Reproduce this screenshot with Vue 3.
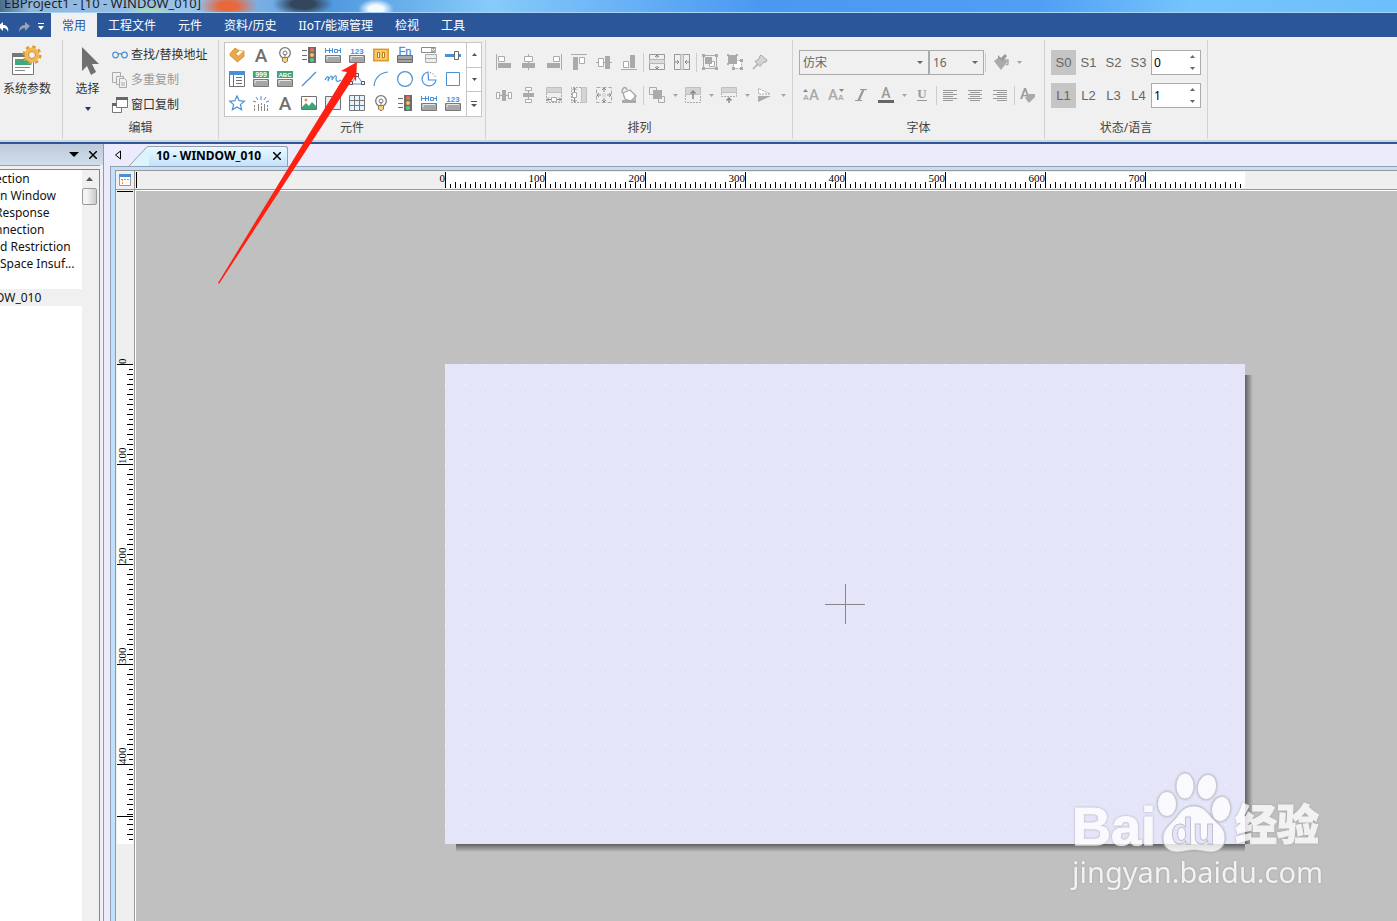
<script setup>
import { ref } from 'vue'

const blue = '#4a90d9'
const key = '<path d="M.5 8.500h15v7H.5z" fill="#a6a6a6" stroke="#7a7a7a"/><path d="M2 12.500V9.500h12" fill="none" stroke="#e8e8e8"/>'
const small = (txt, y, size, fill) =>
  `<text x="8" y="${y}" font-size="${size}" font-weight="700" text-anchor="middle" fill="${fill}">${txt}</text>`
const letter = '<text x="8" y="14.500" font-size="19" font-weight="500" font-family="Roboto, sans-serif" text-anchor="middle" fill="#707070">A</text>'
const bulb = '<circle cx="8" cy="6" r="5.300" fill="#fff" stroke="#777" stroke-width="1.300"/><circle cx="8" cy="6" r="2" fill="none" stroke="#777"/><path d="M8 7v4" stroke="#777"/><path d="M5.500 10.500h5v3.500l-1.500 1.500h-2L5.500 14z" fill="#f7cf7e" stroke="#8a7a55"/>'
const traffic = '<path d="M1 3.500h5M1 8.500h5M1 12.500h5" stroke="#707070"/><rect x="7" width="8" height="16" fill="#6c6c6c"/><circle cx="11" cy="3" r="2" fill="#ff6a4d"/><circle cx="11" cy="8" r="2" fill="#ffc04d"/><circle cx="11" cy="13" r="2" fill="#4fd08f"/>'
const waves = `<path d="M.5 1v5M4.500 1v5M0 3.500h8M7.500 1v5M9.500 2.500h3v3h-3zM12.500 3.500h3M15.500 1v5" fill="none" stroke="${blue}"/>${key}`
const numeric = small('123', 7, 8, blue) + key

const icons = {
  tag: '<path d="M1 6.500 6 1l4 2.500L6.500 7l3 2L15 4v5.500L8.500 15 1 8.500z" fill="#e9a94a" stroke="#c98726" stroke-width=".7"/><path d="m6.500 7 4-3.500L15 4 9.500 9z" fill="#fff" stroke="#c98726" stroke-width=".6"/>',
  letter, bulb, traffic, waves, numeric,
  panel: '<rect x=".8" y="2.300" width="14.400" height="11.400" fill="#fcc863" stroke="#d99a2b" stroke-width="1.500"/><path d="M4.500 5.500h2v5h-2zM9.500 5.500h2v5h-2z" fill="#fff" stroke="#b27a1c"/>',
  fn: `<text x="8" y="7.500" font-size="11" text-anchor="middle" fill="${blue}" stroke="${blue}" stroke-width=".3">Fn</text><path d="M.5 8.500h15v7H.5z" fill="#a3a3a3" stroke="#6e6e6e"/><path d="M1 12.500h14" stroke="#6e6e6e"/>`,
  combo: '<path d="M.5.5h14v5H.5z" fill="#fff" stroke="#8a8a8a"/><path d="M10 1h5v4h-5z" fill="#aaa"/><path d="m11 2 1.500 1.500L14 2" fill="none" stroke="#fff"/><path d="M4.500 7.500h11v8h-11zM4.500 11.500h11" fill="#eee" stroke="#aaa"/>',
  slider: `<path d="M0 8.500h16" stroke="${blue}" stroke-width="3"/><path d="M9.500 4.500h4v8h-4z" fill="#fff" stroke="#666"/>`,
  list: `<path d="M.5 1.500h15v14H.5z" fill="#fff" stroke="#707070"/><path d="M0 0h16v4H0z" fill="${blue}"/><path d="M4.500 4v11M7 6.500h6M7 9.500h6M7 12.500h6" stroke="#707070"/>`,
  nines: '<path d="M0 0h16v7H0z" fill="#3da57b"/>' + small('999', 6, 7, '#fff') + key,
  abc: '<path d="M0 0h16v7H0z" fill="#3da57b"/>' + small('ABC', 6, 6, '#fff') + key,
  line: `<path d="M1 15 15 1" stroke="${blue}" stroke-width="1.200"/>`,
  curve: `<path d="M0 9c3-5 4-4 3 1 3-7 5-6 4-1 3-6 5-5 4-1 0 3 2 3 5 1" fill="none" stroke="${blue}" stroke-width="1.200"/>`,
  polygon: `<path d="m8 4 6 9H2z" fill="none" stroke="${blue}"/><path d="M6.500 2.500h3v3h-3zM.5 10.500h3v3h-3zM12.500 10.500h3v3h-3z" fill="#fff" stroke="#555"/>`,
  arc: `<path d="M1 15C2 6 7 2 15 1" fill="none" stroke="${blue}" stroke-width="1.200"/>`,
  circle: `<circle cx="8" cy="8" r="7.400" fill="none" stroke="${blue}" stroke-width="1.200"/>`,
  pie: `<path d="M7 1a7 7 0 1 0 8 8H7.500z" fill="none" stroke="${blue}" stroke-width="1.200"/><path d="M9 1.500a7 7 0 0 1 5.500 5" fill="none" stroke="#555" stroke-dasharray="1 2"/>`,
  rect: `<path d="M1.500 1.500h13v13h-13z" fill="none" stroke="${blue}"/>`,
  star: `<path d="m8 1 2.100 4.700 5.200.5-3.900 3.400 1.200 5.100L8 12l-4.600 2.700 1.200-5.100L.7 6.200l5.200-.5z" fill="none" stroke="${blue}" stroke-width="1.200"/>`,
  burst: `<path d="M8 1v4M3 2l2 3M13 2l-2 3M0 6l3 1M16 6l-3 1" stroke="${blue}"/><path d="M1.500 10v2M1.500 13v3M5.500 9v7M8.500 8v2M8.500 11v5M11.500 9v7M14.500 10v2M14.500 13v3" stroke="#888"/>`,
  image: '<path d="M.5 1.500h15v13H.5z" fill="#fff" stroke="#707070"/><path d="m1 12 4-4 3 3 3-4 4 4v3H1z" fill="#3da57b"/><circle cx="5" cy="5" r="1.600" fill="#f09050"/>',
  frame: `<path d="M.5 1.500h15v13H.5z" fill="#e3f0fb" stroke="#707070"/>`,
  grid: '<path d="M.5.5h15v15H.5z" fill="#e3f3ff" stroke="#777"/><path d="M5.500 0v16M10.500 0v16M0 5.500h16M0 10.500h16" stroke="#777"/>',

  alignLeft: '<path d="M.5 0v16" stroke="#aaa"/><path d="M2.500 2.500h6v5h-6z" fill="#fff" stroke="#aaa"/><path d="M2 9h13v5H2z"/>',
  alignCenter: '<path d="M7.500 0v16" stroke="#aaa"/><path d="M3.500 2.500h8v5h-8z" fill="#fff" stroke="#aaa"/><path d="M1 9h13v5H1z"/>',
  alignRight: '<path d="M15.500 0v16" stroke="#aaa"/><path d="M7.500 2.500h6v5h-6z" fill="#fff" stroke="#aaa"/><path d="M1 9h13v5H1z"/>',
  alignTop: '<path d="M0 .5h16" stroke="#aaa"/><path d="M8.500 3.500h5v6h-5z" fill="#fff" stroke="#aaa"/><path d="M2 3h5v13H2z"/>',
  alignMiddle: '<path d="M0 8.500h16" stroke="#aaa"/><path d="M2.500 4.500h5v8h-5z" fill="#fff" stroke="#aaa"/><path d="M9 2h5v13H9z"/>',
  alignBottom: '<path d="M0 15.500h16" stroke="#aaa"/><path d="M2.500 7.500h5v6h-5z" fill="#fff" stroke="#aaa"/><path d="M9 1h5v13H9z"/>',
  midV: '<path d="M.5.5h15v15H.5z" fill="none" stroke="#999"/><path d="M.5 5.500h15v4H.5z" fill="#ddd" stroke="#b5b5b5"/><path d="M8 1v3M8 12v3M6 3l2-2 2 2M6 13l2 2 2-2" fill="none" stroke="#888"/>',
  midH: '<path d="M.5.5h15v15H.5z" fill="none" stroke="#999"/><path d="M6.500.5h3v15h-3z" fill="#ddd" stroke="#bbb"/><path d="M1 8h4M11 8h4M3 6l2 2-2 2M13 6l-2 2 2 2" fill="none" stroke="#888"/>',
  group: '<path d="M1.500 1.500h13v13h-13z" fill="none" stroke="#aaa"/><path d="M0 0h3v3H0zM13 0h3v3h-3zM0 13h3v3H0zM13 13h3v3h-3z"/><path d="M7.500 7.500h5v5h-5z" fill="#fff" stroke="#aaa"/><path d="M3 3h7v7H3z"/>',
  ungroup: '<path d="M8.500 6.500h6v8h-8V9" fill="#fff" stroke="#aaa" stroke-dasharray="2 1"/><path d="M1 1h9v9H1zM0 0h2v2H0zM9 0h2v2H9zM0 9h2v2H0zM13 5h3v3h-3zM5 13h3v3H5zM13 13h3v3h-3z"/>',
  pin: '<path d="m1 15 6-6" stroke="#aaa" stroke-width="1.500"/><path d="m9 1 6 5-1 2-3 .5-3 4-5-5 4-2.500L8 2z" fill="#d4d4d4" stroke="#a9a9a9"/>',
  spreadH: '<path d="M0 8.500h16" stroke="#aaa"/><path d="M.5 5.500h3v6h-3zM12.500 5.500h3v6h-3z" fill="#fff" stroke="#aaa"/><path d="M6 3h4v11H6z"/>',
  spreadV: '<path d="M7.500 0v16" stroke="#aaa"/><path d="M4.500.5h6v3h-6zM4.500 12.500h6v3h-6z" fill="#fff" stroke="#aaa"/><path d="M2 6h11v4H2z"/>',
  sameW: '<path d="M.5.500h15v5H.5z" fill="#d4d4d4" stroke="#c0c0c0"/><path d="M.5 6v9.500h15V6" fill="none" stroke="#aaa" stroke-dasharray="2 1"/><path d="M1 12.500h14M3 10.500l-2 2 2 2M13 10.500l2 2-2 2" fill="none" stroke="#888"/><path d="M5.500 10.500h5v4h-5z" fill="#fff" stroke="#aaa"/>',
  sameH: '<path d="M10.500.5h5v15h-5z" fill="#d4d4d4" stroke="#c0c0c0"/><path d="M10 .5H.5v15H10" fill="none" stroke="#aaa" stroke-dasharray="2 1"/><path d="M3.500 1v14M1.500 3l2-2 2 2M1.500 13l2 2 2-2" fill="none" stroke="#888"/><path d="M1.500 5.500h4v5h-4z" fill="#fff" stroke="#aaa"/>',
  sameSize: '<path d="M.5.5h15v15H.5z" fill="none" stroke="#aaa" stroke-dasharray="4 2"/><path d="M8 1v4M8 11v4M1 8h4M11 8h4M6 3l2-2 2 2M6 13l2 2 2-2M3 6 1 8l2 2M13 6l2 2-2 2" fill="none" stroke="#888"/><path d="M6 6h4v4H6z" fill="#ddd"/>',
  rotate: '<path d="M1 13h14v3H1z"/><path d="m2 6 7-3 6 6-5 5-6-2z" fill="#fff" stroke="#a5a5a5" stroke-width="1.300"/><path d="M1 6c0-6 4-7 5-3M14 8v5" fill="none" stroke="#aaa" stroke-width="1.500"/>',
  layer: '<path d="M.5.500h7v7h-7zM9.500 9.500h6v6h-6z" fill="none" stroke="#aaa"/><path d="M4 3h9v9H4z"/>',
  moveUp: '<path d="M.5.500h15v7H.5z" fill="#d4d4d4" stroke="#c0c0c0"/><path d="M.5 8v7.500h15V8" fill="none" stroke="#aaa" stroke-dasharray="2 1"/><path d="M8 12V4M5.500 6.500 8 4l2.500 2.500" fill="none" stroke="#888" stroke-width="1.500"/>',
  moveDown: '<path d="M.5.500h15v5H.5z" fill="#d4d4d4" stroke="#c0c0c0"/><path d="M.5 6v3.500h15V6" fill="none" stroke="#aaa" stroke-dasharray="2 1"/><path d="M8 16v-5M5.500 13.500 8 11l2.500 2.500" fill="none" stroke="#888" stroke-width="1.500"/>',
  flip: '<path d="M1.500 1.500v5.500H13z" fill="#fff" stroke="#aaa" stroke-dasharray="2 1"/><path d="M1 9h13L1 15z"/>',

  bucket: '<path d="m1 7 5-4 9 4-7 9z"/><path d="m5 1 3 3 4-4 2 2-4 5-5-3z" fill="#999"/><path d="M12 6h3v4l-2 1" fill="none" stroke="#aaa" stroke-width="1.500"/>',
  grow: '<text x="11" y="13" font-size="15" font-weight="500" text-anchor="middle" font-family="Roboto, sans-serif">A</text><text x="3" y="13" font-size="8" font-weight="700" text-anchor="middle">A</text><path d="m0 5 2.500-3L5 5z" fill="#888"/>',
  shrink: '<text x="5" y="13" font-size="15" font-weight="500" text-anchor="middle" font-family="Roboto, sans-serif">A</text><text x="13" y="13" font-size="8" font-weight="700" text-anchor="middle">A</text><path d="m11 2 2.500 3L16 2z" fill="#888"/>',
  italic: '<path d="M7 2.500h7M2 13.500h7" stroke="#999"/><path d="M10.500 2.500 5.500 13.500" stroke="#999" stroke-width="2.200"/>',
  color: '<text x="8" y="11" font-size="14" font-weight="500" text-anchor="middle" font-family="Roboto, sans-serif" fill="#999">A</text><path d="M0 13h16v3H0z" fill="#666"/>',
  underline: '<text x="8" y="11" font-size="13" font-weight="700" text-anchor="middle" font-family="Liberation Serif, serif" fill="#999">U</text><path d="M3 13.500h10" stroke="#999"/>',
  textLeft: '<path d="M1 3.500h14M1 5.500h10M1 7.500h14M1 9.500h10M1 11.500h14M1 13.500h10" stroke="#999"/>',
  textCenter: '<path d="M1 3.500h14M3 5.500h10M1 7.500h14M3 9.500h10M1 11.500h14M3 13.500h10" stroke="#999"/>',
  textRight: '<path d="M1 3.500h14M5 5.500h10M1 7.500h14M5 9.500h10M1 11.500h14M5 13.500h10" stroke="#999"/>',
  textStyle: '<text x="5" y="12" font-size="15" font-weight="500" text-anchor="middle" font-family="Roboto, sans-serif" fill="#999">A</text><path d="m5 11 4-4h6v3l-6 6z"/>',

  glasses: `<circle cx="3.500" cy="8" r="2.800" fill="none" stroke="${blue}" stroke-width="1.200"/><circle cx="12.500" cy="8" r="2.800" fill="none" stroke="${blue}" stroke-width="1.200"/><path d="M6 7.500c1-1 3-1 4 0" fill="none" stroke="#666"/>`,
  copies: '<path d="M.5.500h8v10h-8z" fill="#f0f0f0" stroke="#aaa"/><path d="M4.500 4.500h7v8h-7z" fill="#f0f0f0" stroke="#aaa"/><path d="M7.500 6.500h5l2 2v7h-7zM9 11h4M9 13h4" fill="#f0f0f0" stroke="#aaa"/>',
  windows: '<path d="M.5 7.500h9v8h-9z" fill="#fff" stroke="#777"/><path d="M4.500.500h11v10h-11z" fill="#fff" stroke="#777"/><path d="M4 0h12v3H4zM0 6h4v3H0z" fill="#666"/>'
}

const menu = ['常用', '工程文件', '元件', '资料/历史', 'IIoT/能源管理', '检视', '工具']
const active = ref('常用')
const gallery = [
  'tag', 'letter', 'bulb', 'traffic', 'waves', 'numeric', 'panel', 'fn', 'combo', 'slider',
  'list', 'nines', 'abc', 'line', 'curve', 'polygon', 'arc', 'circle', 'pie', 'rect',
  'star', 'burst', 'letter', 'image', 'frame', 'grid', 'bulb', 'traffic', 'waves', 'numeric'
]
const editItems = [
  { icon: 'glasses', label: '查找/替换地址' },
  { icon: 'copies', label: '多重复制', disabled: true },
  { icon: 'windows', label: '窗口复制' }
]
const arrange = [
  ['alignLeft', 'alignCenter', 'alignRight', 'alignTop', 'alignMiddle', 'alignBottom', '|', 'midV', 'midH', '|', 'group', 'ungroup', 'pin'],
  ['spreadH', 'spreadV', 'sameW', 'sameH', 'sameSize', 'rotate', '|', 'layer', '>', 'moveUp', '>', 'moveDown', '>', 'flip', '>']
]
const fontTools = ['grow', 'shrink', 'italic', 'color', '>', 'underline', '|', 'textLeft', 'textCenter', 'textRight', '|', 'textStyle']
const states = ref([
  { name: '状态', keys: ['S0', 'S1', 'S2', 'S3'], value: 0 },
  { name: '语言', keys: ['L1', 'L2', 'L3', 'L4'], value: 1 }
])
const tree = [
  { text: 'ection', cut: true },
  { text: 'n Window' },
  { text: 'Response', cut: true },
  { text: 'nnection', cut: true },
  { text: 'd Restriction' },
  { text: 'Space Insuf...' },
  { text: '' },
  { text: 'OW_010', current: true, cut: true }
]
const ticks = (length) => Array.from({ length: length / 5 }, (_, i) => i * 5)
const tickSize = (v) => (v % 100 === 0 ? 16 : v % 10 === 0 ? 6 : 4)
const labels = (length) => ticks(length).filter((v) => v % 100 === 0)
</script>

<template>
  <div class="app">
    <header class="title"><span>EBProject1 - [10 - WINDOW_010]</span></header>

    <nav class="menu">
      <div class="quick">
        <button aria-label="撤销"><svg width="12" height="12" viewBox="0 0 12 12"><path d="M0 5 5 1v3c4 0 6 3 5 7-1-3-2-4-5-4v3z" fill="#fff" /></svg></button>
        <button aria-label="重做"><svg width="12" height="12" viewBox="0 0 12 12"><path d="M12 5 7 1v3C3 4 1 7 1 11c2-3 3-4 6-4v3z" fill="#a2a2a2" /></svg></button>
        <button aria-label="更多"><svg width="6" height="8" viewBox="0 0 6 8"><path d="M0 .500h6" stroke="#fff" /><path d="M0 3h6L3 7z" fill="#fff" /></svg></button>
      </div>
      <button v-for="m in menu" :key="m" class="tab" :class="{ on: m === active }" @click="active = m">{{ m }}</button>
    </nav>

    <section class="ribbon">
      <div class="group system">
        <button class="large">
          <svg width="32" height="32" viewBox="0 0 32 32">
            <path d="M1.500 8.500h21v21h-21z" fill="#fff" stroke="#777" /><path d="M1 8h13v4H1z" fill="#777" />
            <path d="M4 14h16v6H4z" fill="#43a77b" /><path d="M4 22.500h15M4 25.500h10" stroke="#888" />
            <circle cx="21" cy="10" r="8" fill="none" stroke="#d99a3c" stroke-width="3" stroke-dasharray="3.280 3" />
            <circle cx="21" cy="10" r="5.500" fill="#f0f0f0" stroke="#f4b752" stroke-width="4" /><circle cx="21" cy="10" r="3.500" fill="#f0f0f0" stroke="#c98d38" />
          </svg>
          系统参数
        </button>
      </div>

      <div class="group edit">
        <div class="body">
          <button class="large">
            <svg width="32" height="32" viewBox="0 0 32 32"><path d="M10 2v24l5-5 4 9 5-3-4-8h7z" fill="#707070" /></svg>
            选择
            <svg class="caret dark" width="6" height="4" viewBox="0 0 6 4"><path d="M0 0h6L3 4z" /></svg>
          </button>
          <div class="commands">
            <button v-for="e in editItems" :key="e.label" :disabled="e.disabled">
              <svg class="icon" viewBox="0 0 16 16" v-html="icons[e.icon]" />{{ e.label }}
            </button>
          </div>
        </div>
        <h2>编辑</h2>
      </div>

      <div class="group parts">
        <div class="gallery">
          <div class="cells">
            <button v-for="(g, i) in gallery" :key="i" :aria-label="g"><svg class="icon" viewBox="0 0 16 16" v-html="icons[g]" /></button>
          </div>
          <div class="scroller">
            <button aria-label="上"><svg width="5" height="3" viewBox="0 0 5 3"><path d="M0 3h5L2.500 0z" /></svg></button>
            <button aria-label="下"><svg width="5" height="3" viewBox="0 0 5 3"><path d="M0 0h5L2.500 3z" /></svg></button>
            <button aria-label="展开"><svg width="6" height="7" viewBox="0 0 6 7"><path d="M0 0h6v1H0zM0 3h6L3 6z" /></svg></button>
          </div>
        </div>
        <h2>元件</h2>
      </div>

      <div class="group arrange">
        <div v-for="(row, r) in arrange" :key="r" class="tools">
          <template v-for="(t, i) in row" :key="i">
            <i v-if="t === '|'" class="sep" />
            <button v-else-if="t === '>'" class="drop" aria-label="更多选项"><svg class="caret" width="5" height="3" viewBox="0 0 5 3"><path d="M0 0h5L2.500 3z" /></svg></button>
            <button v-else class="tool" :aria-label="t"><svg class="icon" viewBox="0 0 16 16" v-html="icons[t]" /></button>
          </template>
        </div>
        <h2>排列</h2>
      </div>

      <div class="group font">
        <div class="tools">
          <label class="pick family"><select aria-label="字体"><option>仿宋</option></select><svg width="6" height="3" viewBox="0 0 6 3"><path d="M0 0h6L3 3z" /></svg></label>
          <label class="pick size"><select aria-label="字号"><option>16</option></select><svg width="6" height="3" viewBox="0 0 6 3"><path d="M0 0h6L3 3z" /></svg></label>
          <i class="sep wide" />
          <button class="tool" aria-label="填充"><svg class="icon" viewBox="0 0 16 16" v-html="icons.bucket" /></button>
          <button class="drop" aria-label="更多选项"><svg class="caret" width="5" height="3" viewBox="0 0 5 3"><path d="M0 0h5L2.500 3z" /></svg></button>
        </div>
        <div class="tools">
          <template v-for="(t, i) in fontTools" :key="i">
            <i v-if="t === '|'" class="sep" />
            <button v-else-if="t === '>'" class="drop" aria-label="更多选项"><svg class="caret" width="5" height="3" viewBox="0 0 5 3"><path d="M0 0h5L2.500 3z" /></svg></button>
            <button v-else class="tool" :aria-label="t"><svg class="icon" viewBox="0 0 16 16" v-html="icons[t]" /></button>
          </template>
        </div>
        <h2>字体</h2>
      </div>

      <div class="group state">
        <div v-for="s in states" :key="s.name" class="tools">
          <button v-for="(k, i) in s.keys" :key="k" class="key" :class="{ on: i === 0 }">{{ k }}</button>
          <div class="spin">
            <input v-model="s.value" type="number" :aria-label="s.name">
            <div>
              <button aria-label="增加" @click="s.value++"><svg width="5" height="3" viewBox="0 0 5 3"><path d="M0 3h5L2.500 0z" /></svg></button>
              <button aria-label="减少" @click="s.value--"><svg width="5" height="3" viewBox="0 0 5 3"><path d="M0 0h5L2.500 3z" /></svg></button>
            </div>
          </div>
        </div>
        <h2>状态/语言</h2>
      </div>
    </section>

    <main class="work">
      <aside class="side">
        <div class="side-head">
          <button aria-label="菜单"><svg width="10" height="5" viewBox="0 0 10 5"><path d="M0 0h10L5 5z" /></svg></button>
          <button aria-label="关闭"><svg width="8" height="8" viewBox="0 0 8 8"><path d="m0 0 8 8M8 0 0 8" stroke="#000" stroke-width="1.500" /></svg></button>
        </div>
        <div class="side-body">
          <ul>
            <li v-for="(t, i) in tree" :key="i" :class="{ current: t.current, cut: t.cut }"><span>{{ t.text }}</span></li>
          </ul>
          <div class="scroll">
            <svg width="8" height="4" viewBox="0 0 8 4"><path d="M0 4h7L3.500 0z" fill="#555" /></svg>
            <span class="thumb" />
          </div>
        </div>
      </aside>

      <section class="doc">
        <div class="doc-tabs">
          <button class="prev" aria-label="上一个"><svg width="6" height="10" viewBox="0 0 6 10"><path d="M5.500 1v8l-5-4z" fill="none" stroke="#000" /></svg></button>
          <div class="doc-tab">
            <svg width="20" height="20" viewBox="0 0 20 20"><path d="M0 20 16 3C17 1.500 18 .5 20 .5V20z" fill="#dcf4fe" /><path d="M0 20 16 3C17 1.500 18 .5 20 .5" fill="none" stroke="#929fb0" /></svg>
            <div class="doc-name">
              <span>10 - WINDOW_010</span>
              <button aria-label="关闭窗口"><svg width="8" height="8" viewBox="0 0 8 8"><path d="m0 0 8 8M8 0 0 8" stroke="#000" stroke-width="1.500" /></svg></button>
            </div>
          </div>
        </div>
        <div class="frame">
          <div class="corner">
            <svg width="12" height="12" viewBox="0 0 12 12"><path d="M.5.500h11v11H.5z" fill="#fff" stroke="#999" /><path d="M0 0h12v3H0z" fill="#4a90d9" /><path d="M2 5.500h8M3.500 5v6" stroke="#e58a4e" stroke-dasharray="2 1" /></svg>
          </div>
          <div class="ruler-x">
            <svg width="800" height="16" viewBox="0 0 800 16">
              <rect width="800" height="16" fill="#fff" />
              <rect v-for="v in ticks(800)" :key="v" :x="v" :y="16 - tickSize(v)" width="1" :height="tickSize(v)" />
              <text v-for="v in labels(800)" :key="v" :x="v" y="10">{{ v }}</text>
            </svg>
          </div>
          <div class="ruler-y">
            <svg width="16" height="480" viewBox="0 0 16 480">
              <rect width="16" height="480" fill="#fff" />
              <rect v-for="v in ticks(480)" :key="v" :x="16 - tickSize(v)" :y="v" :width="tickSize(v)" height="1" />
              <rect y="452" width="16" height="1" />
              <text v-for="v in labels(480)" :key="v" x="0" y="0" :transform="`translate(9 ${v}) rotate(-90)`">{{ v }}</text>
            </svg>
          </div>
          <div class="canvas">
            <div class="board">
              <svg width="100%" height="100%">
                <defs><pattern id="dots" width="20" height="20" patternUnits="userSpaceOnUse"><rect width="1" height="1" fill="#fff" /></pattern></defs>
                <rect width="100%" height="100%" fill="url(#dots)" />
                <path d="M400.500 220v40M380 240.500h40" stroke="#888" />
              </svg>
            </div>
            <div class="mark">
              <div class="mark-logo">
                <span>Bai</span>
                <svg width="76" height="82" viewBox="0 0 76 82">
                  <g fill="#fff" stroke="#c4c4cc">
                    <ellipse cx="11" cy="32" rx="9.500" ry="12.500" /><ellipse cx="29" cy="14" rx="9" ry="13" />
                    <ellipse cx="51" cy="15" rx="9.500" ry="12.500" transform="rotate(12 51 15)" /><ellipse cx="65" cy="37" rx="9.500" ry="12.500" transform="rotate(8 65 37)" />
                    <path d="M38 34c9 0 13 6 18 12 7 7 13 10 13 20 0 9-7 14-14 14-6 0-10-2-17-2s-11 2-17 2C12 80 7 74 7 66c0-9 7-13 13-20 5-7 9-12 18-12z" />
                  </g>
                  <text x="37" y="72" text-anchor="middle">du</text>
                </svg>
                <span class="cn">经验</span>
              </div>
              <div class="mark-url">jingyan.baidu.com</div>
            </div>
          </div>
        </div>
      </section>
    </main>

    <svg class="pointer" width="140" height="224" viewBox="0 0 140 224"><path d="M139 0 123 9l6 1L0 221l1 1L136 15l2 5z" fill="#ff2012" /></svg>
  </div>
</template>

<style>
body { margin: 0; background: #ebebfb; }
</style>

<style scoped>
.app { position: relative; display: flex; flex-direction: column; min-height: 100vh; overflow: hidden; font: 12px/16px "Noto Sans", "Noto Sans CJK SC", sans-serif; color: #333; }
.app * { box-sizing: border-box; }
button { display: flex; align-items: center; justify-content: center; padding: 0; border: 0; background: none; font: inherit; color: inherit; }
svg { display: block; flex: none; }
.icon { width: 16px; height: 16px; overflow: visible; font-family: "Liberation Sans", sans-serif; }

.title { display: flex; align-items: flex-end; height: 13px; padding-left: 4px; overflow: hidden; border-bottom: 1px solid #a9d4f5; color: #222; font-size: 13px; line-height: 18px; white-space: nowrap;
  background:
    radial-gradient(ellipse 30px 14px at 228px 6px, #e8673c 30%, transparent),
    radial-gradient(ellipse 30px 12px at 303px 4px, #34465c 40%, transparent),
    radial-gradient(ellipse 18px 10px at 376px 9px, #f4fbff 40%, transparent),
    radial-gradient(ellipse 26px 8px at 150px 13px, #a7dcb0 30%, transparent),
    linear-gradient(90deg, #4c6c88 0, #8fb6dd 30px, #9ac2ea 190px, #79aee3 260px, #4f98df 330px, #86cbfa 490px, #4a98f2 760px, #4f9ff5 1040px, #76c4fd 1190px, #6cbffb 100%); }

.menu { display: flex; height: 24px; background: #2b579a; color: #fff; }
.quick { display: flex; align-items: center; width: 51px; gap: 8px; padding-top: 3px; }
.quick button:first-child { margin-left: -2px; }
.tab { padding: 2px 11px 0; white-space: nowrap; }
.tab.on { background: #f0f0f0; color: #2b579a; }

.ribbon { display: flex; height: 107px; padding: 3px 0; background: #f0f0f0; border-bottom: 2px solid #2b579a; box-shadow: inset 0 -2px #d0d5dc; }
.group { display: flex; flex-direction: column; flex: none; height: 99px; border-right: 1px solid #d2d2d2; }
.group h2 { margin: auto 0 3px; font: inherit; text-align: center; color: #444; }
.large { flex-direction: column; width: 54px; justify-content: flex-start; gap: 4px; padding-top: 5px; white-space: nowrap; }
.large .caret { margin-top: 6px; }
.caret { fill: #a5a5a5; }
.caret.dark { fill: #1f3864; }
.system { width: 63px; }
.edit { width: 156px; }
.body { display: flex; }
.edit .large { width: 49px; }
.commands { display: flex; flex-direction: column; align-items: flex-start; gap: 9px; padding-top: 7px; }
.commands button { gap: 3px; white-space: nowrap; }
.commands button:disabled { color: #9a9a9a; }

.parts { width: 267px; padding: 0 5px; }
.gallery { display: flex; width: 258px; height: 75px; margin-top: 2px; background: #fff; border: 1px solid #c6c6c6; }
.cells { display: grid; flex: 1; grid-template-columns: repeat(10, 24px); grid-auto-rows: 24px; }
.scroller { display: flex; flex-direction: column; width: 15px; border-left: 1px solid #c6c6c6; fill: #555; }
.scroller button { flex: 1; }
.scroller button + button { border-top: 1px solid #c6c6c6; }

.tools { display: flex; align-items: center; height: 25px; margin-top: 8px; }
.tools:first-child { margin-top: 10px; }
.tool { flex: none; align-items: flex-start; justify-content: flex-start; width: 25px; height: 25px; padding: 4px; fill: #aaa; }
.drop { flex: none; width: 11px; height: 25px; }
.sep { flex: none; width: 1px; height: 19px; margin: 0 1px; background: #cdcdcd; }
.sep.wide { margin-right: 3px; }
.arrange { width: 307px; padding: 0 5px 0 6px; }
.font { width: 252px; padding: 0 6px; }
.pick { position: relative; height: 25px; }
.pick select { width: 100%; height: 25px; padding: 0 3px; appearance: none; border: 1px solid #ababab; border-radius: 0; background: #f0f0f0; font: inherit; color: #666; }
.pick svg { position: absolute; right: 6px; top: 11px; fill: #666; pointer-events: none; }
.family { width: 130px; }
.size { width: 55px; }

.state { width: 163px; padding: 0 6px; }
.key { width: 25px; height: 25px; font: 13px/16px "Liberation Sans", sans-serif; color: #666; }
.key.on { background: #c5c5c5; }
.spin { display: flex; width: 50px; height: 25px; background: #fff; border: 1px solid #ababab; }
.spin input { width: 32px; min-width: 0; padding: 0 2px; border: 0; background: none; font: inherit; color: #000; appearance: textfield; }
.spin input::-webkit-inner-spin-button { appearance: none; }
.spin div { flex: 1; display: flex; flex-direction: column; fill: #666; }
.spin button { flex: 1; }

.work { display: flex; flex: 1; background: #ebebfb; }
.side { display: flex; flex-direction: column; width: 104px; flex: none; border-right: 1px solid #98989e; background: #f0f0f0; }
.side-head { display: flex; align-items: center; justify-content: flex-end; gap: 10px; height: 21px; padding-right: 6px; background: linear-gradient(#bccad9, #d0deec); }
.side-body { display: flex; flex: 1; margin: 4px 3px 0 0; border: 1px solid #828790; border-width: 1px 1px 0 0; background: #fff; box-shadow: 0 -3px #f0f0f0, 0 -4px #a0a0a0; }
.side ul { flex: 1; margin: 0; padding: 0; list-style: none; overflow: hidden; color: #111; }
.side li { height: 17px; line-height: 17px; white-space: nowrap; }
.side li.current { background: #f0f0f0; }
.side li.cut { margin-left: -5px; }
.scroll { display: flex; flex-direction: column; align-items: flex-start; width: 17px; background: #f0f0f0; }
.scroll svg { margin: 7px 4px; }
.thumb { width: 15px; height: 17px; border: 1px solid #999; border-radius: 2px; background: linear-gradient(90deg, #f4f4f4 30%, #c9c9cc); }

.doc { display: flex; flex: 1; flex-direction: column; min-width: 0; padding-left: 6px; }
.doc-tabs { display: flex; align-items: flex-end; height: 22px; }
.prev { width: 6px; height: 22px; margin: 0 8px 0 5px; }
.doc-tab { display: flex; height: 20px; }
.doc-name { display: flex; align-items: center; justify-content: space-between; gap: 8px; width: 139px; height: 20px; padding: 0 6px 1px 7px; background: linear-gradient(#e8f9ff, #c2e2fd); border: 1px solid #929fb0; border-left: 0; border-bottom: 0; border-radius: 0 3px 0 0; font-weight: 700; color: #000; white-space: nowrap; }
.frame { display: grid; flex: 1; grid-template: 20px 1fr / 20px minmax(0, 1fr); padding: 3px 0 0 4px; border: 1px solid #929fb0; border-width: 1px 0 0 1px; background: #c1e0fc; }
.corner, .ruler-x, .ruler-y { border: 0 solid #989898; background: #efefef; }
.corner { padding: 3px; border-width: 1px; }
.ruler-x { padding: 1px 0 0 310px; border-width: 1px 0; overflow: hidden; background: linear-gradient(#000, #000) 1px 1px / 1px 16px no-repeat #efefef; }
.ruler-y { padding: 174px 0 0 1px; border-width: 0 1px; background: linear-gradient(#000, #000) 1px 1px / 16px 1px no-repeat #efefef; }
.ruler-x svg, .ruler-y svg { overflow: visible; font: 11px "Liberation Serif", serif; shape-rendering: crispEdges; }
.ruler-x text { text-anchor: end; }
.canvas { position: relative; padding: 173px 0 76px 309px; background: #c0c0c0; border: 1px solid #fff; border-width: 1px 0 0 1px; overflow: hidden; }
.board { position: relative; width: 800px; height: 480px; background: #e5e5fa; }
.board::before { content: ""; position: absolute; left: 100%; top: 11px; bottom: 0; width: 8px; background: linear-gradient(90deg, #606060, #c0c0c0); }
.board::after { content: ""; position: absolute; top: 100%; left: 11px; right: 0; height: 8px; background: linear-gradient(#606060, #c0c0c0); }
.mark { position: absolute; left: 936px; top: 581px; color: #fff; opacity: .8; white-space: nowrap; filter: drop-shadow(0 0 1px #999); }
.mark-logo { display: flex; align-items: flex-end; height: 82px; font: 700 54px/56px "Liberation Sans", "Noto Sans CJK SC", sans-serif; -webkit-text-stroke: 1px #fff; }
.mark-logo text { font: 700 36px "Liberation Sans", sans-serif; fill: #e5e5fa; stroke: #b9b9c8; -webkit-text-stroke: 1px #b9b9c8; }
.mark-logo .cn { margin-left: 3px; font-size: 42px; font-weight: 900; }
.mark-url { font: 29px/36px "Noto Sans", sans-serif; }
.pointer { position: absolute; left: 218px; top: 62px; pointer-events: none; }
</style>
